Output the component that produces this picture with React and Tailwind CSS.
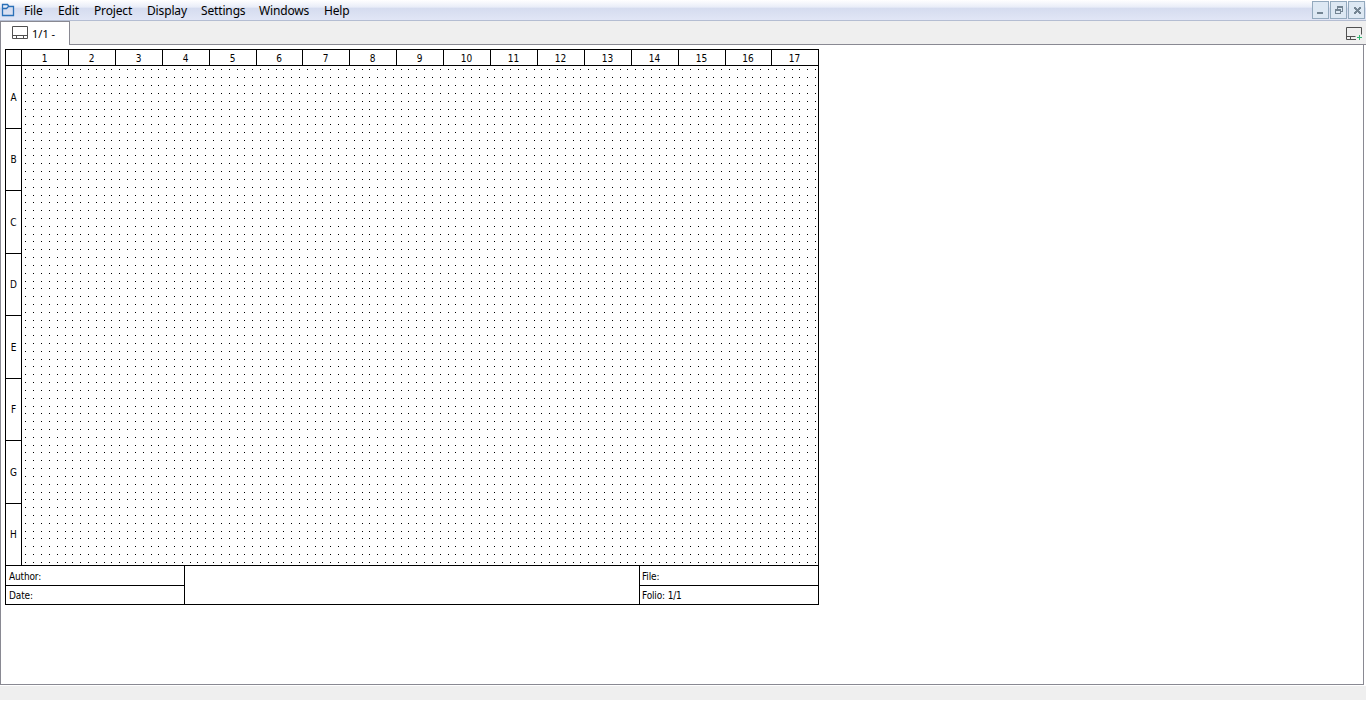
import React from "react";

const columns = [47, 47, 47, 47, 47, 46, 47, 47, 47, 47, 47, 47, 47, 47, 47, 46, 46];
const rows = [63, 62, 63, 62, 63, 62, 63, 62];
const menus = [
  ["File", "w-[34px]"],
  ["Edit", "w-[36px]"],
  ["Project", "w-[53px]"],
  ["Display", "w-[54px]"],
  ["Settings", "w-[58px]"],
  ["Windows", "w-[65px]"],
  ["Help", "w-[40px]"],
];
const dotsX = Array.from({ length: 102 }, (_, i) => Math.round(3.45 + i * 7.817));
const dotsY = Array.from({ length: 64 }, (_, i) => Math.round(3.45 + i * 7.817));
const dotPath = dotsY.map((y) => dotsX.map((x) => `M${x} ${y}h1v1h-1z`).join("")).join("");

function WindowButton({ children }) {
  return (
    <button className="flex h-[18px] w-[17px] items-center justify-center border border-[#93a9bd] bg-[#dde8f3]">
      <svg width="15" height="16" shapeRendering="crispEdges" fill="#748593">{children}</svg>
    </button>
  );
}

function Sheet() {
  return (
    <div className="ml-1 mt-1 flex w-[814px] flex-col border border-black text-[10px] leading-none text-black">
      <div className="flex h-4 border-b border-black">
        <div className="w-4 shrink-0 border-r border-black" />
        {columns.map((w, i) => (
          <div key={i} className={"flex shrink-0 items-center justify-center pr-px pt-[3px] " + (w === 47 ? "w-[47px]" : "w-[46px]") + (i < 16 ? " border-r border-black" : "")}>
            {i + 1}
          </div>
        ))}
      </div>
      <div className="flex h-[500px] border-b border-black">
        <div className="flex w-4 flex-col border-r border-black">
          {rows.map((h, i) => (
            <div key={i} className={"flex shrink-0 items-center justify-center " + (h === 63 ? "h-[63px] pt-[2px]" : "h-[62px]") + (i < 7 ? " border-b border-black" : "")}>
              {"ABCDEFGH"[i]}
            </div>
          ))}
        </div>
        <svg width="796" height="499" shapeRendering="crispEdges"><path d={dotPath} /></svg>
      </div>
      <div className="flex h-[38px] tracking-[-0.15px]">
        <div className="w-[179px] border-r border-black">
          <div className="flex h-5 items-center border-b border-black pl-[3px] pt-[3px]">Author:</div>
          <div className="flex h-[18px] items-center pl-[3px] pt-px">Date:</div>
        </div>
        <div className="w-[455px] border-r border-black" />
        <div className="flex-1">
          <div className="flex h-5 items-center border-b border-black pl-[2px] pt-[3px]">File:</div>
          <div className="flex h-[18px] items-center pl-[2px] pt-px">Folio: 1/1</div>
        </div>
      </div>
    </div>
  );
}

export default function App() {
  return (
    <div className="flex h-[704px] w-[1366px] flex-col overflow-hidden bg-white font-['DejaVu_Sans_Condensed','DejaVu_Sans',sans-serif]">
      <header className="flex h-[21px] shrink-0 items-center border-b border-[#b4bdd2] bg-[linear-gradient(to_bottom,#ffffff_0%,#e9edf8_35%,#d5dcef_42%,#e1e6f6_100%)] font-['Noto_Sans',sans-serif] text-[12px] text-black">
        <svg width="24" height="20" fill="none" stroke="#2a70b8" strokeWidth="1.3">
          <path d="M2.5 15.5V4.5h5l1.5 2h4.500v9zM2.500 8.500h4l2-2" />
        </svg>
        <nav className="flex pt-[2px] tracking-[-0.15px]">
          {menus.map(([label, width]) => <span key={label} className={width}>{label}</span>)}
        </nav>
        <div className="ml-auto mr-px flex gap-px">
          <WindowButton><path d="M4 10h6v2H4z" /></WindowButton>
          <WindowButton><path d="M6 4h6v6h-2V9h1V6H7v1H6zM4 7h6v5H4zM5 9v2h4V9z" fillRule="evenodd" /></WindowButton>
          <WindowButton><path d="M5 5h2v1h1v1h1V6h1V5h2v2h-1v1h-1v1h1v1h1v2h-2v-1H9v-1H8v1H7v1H5v-2h1V9h1V8H6V7H5z" /></WindowButton>
        </div>
      </header>
      <div className="flex h-6 shrink-0 bg-[#efefef]">
        <div className="flex h-6 w-[70px] items-start border-x border-t border-[#898992] bg-white pl-[11px] pt-1 font-['Noto_Sans',sans-serif] text-[11px] leading-[15px]">
          <svg className="mr-1 shrink-0" width="16" height="13" fill="none" stroke="#505050"><path d="M.5.5h15v12H.5zM.5 9.500h15M4.500 9.500v3M11.500 9.500v3" /></svg>
          <span>1/1 -</span>
        </div>
        <div className="flex flex-1 items-start justify-end border-b border-[#898992] pr-[3px] pt-[6px]">
          <svg width="17" height="15" fill="none" stroke="#505050"><path d="M10 12.500H.5V.5h15v7M.5 9.500h9M4.500 9.500v3" /><path stroke="#2fb56f" d="M11 10.500h5M13.500 8v5" /></svg>
        </div>
      </div>
      <main className="mr-[2px] h-[640px] shrink-0 border-x border-b border-[#898992] bg-white"><Sheet /></main>
      <footer className="mt-px h-[14px] shrink-0 bg-[#efefef]" />
    </div>
  );
}
